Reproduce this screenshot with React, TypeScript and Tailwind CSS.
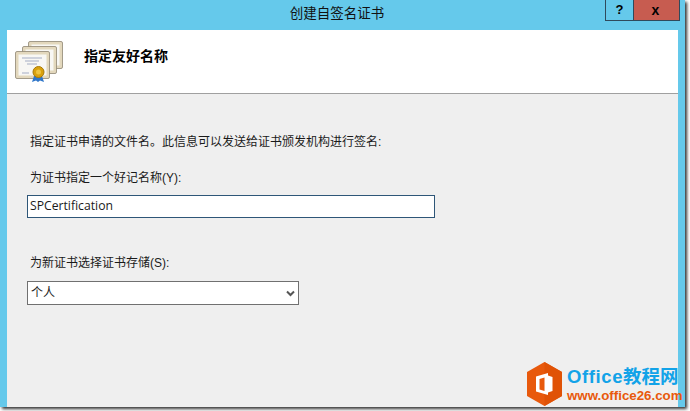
const cjk = "font-['Liberation_Sans','Noto_Sans_CJK_SC',sans-serif]";

function CertIcon() {
  const sheet = (x: number, y: number) => (
    <g>
      <rect x={x + 0.5} y={y + 0.5} width="34" height="27" rx="1.5" fill="#e3d8bd" stroke="#8f8774" strokeWidth="0.8" />
      <rect x={x + 3.5} y={y + 3.5} width="28" height="21" fill="#f8f7f4" />
    </g>
  );
  return (
    <svg width="48" height="42" viewBox="0 0 48 42" className="mt-[3px] shrink-0">
      {sheet(13, 0)}
      {sheet(7, 5)}
      {sheet(0, 10)}
      <path d="M7 17h20M10 20h14M12 23h10M7 32h7" stroke="#a5adc4" strokeWidth="1" />
      <path d="M19 35l-2 6 4-1.500 2 1.500 2-1.500 4 1.500-2-6z" fill="#2f76c9" />
      <circle cx="23.500" cy="31" r="5.500" fill="#d9a10e" stroke="#a87a08" />
      <circle cx="23.500" cy="31" r="2.500" fill="#eec440" />
    </svg>
  );
}

function OfficeLogo() {
  return (
    <div className="absolute left-[527px] top-[362px] flex items-center gap-[5px] whitespace-nowrap">
      <svg width="35" height="44" viewBox="0 0 35 44" className="shrink-0">
        <path d="M17.500 0L35 10V34L17.500 44L0 34V10z" fill="#e8590c" />
        <path d="M17.500 0L35 10V34L17.500 44z" fill="#e05206" />
        <path d="M9 14.500L21 11V33L9 29.500zM12.500 17V27.500L17.500 29V15.500z" fill="#fff" fillRule="evenodd" />
        <path d="M21 13.500L25.500 15V29L21 30.500z" fill="#fff" />
      </svg>
      <div className="flex flex-col">
        <span className="text-[18.500px] leading-[22px] font-bold text-[#12a3e8]">
          <span className="tracking-[0.6px]">Office</span>教程网
        </span>
        <span className="text-[13.300px] leading-[15px] font-bold text-[#e8590c]">www.office26.com</span>
      </div>
    </div>
  );
}

export default function App() {
  return (
    <div className={`relative h-[411px] w-[690px] overflow-hidden bg-white ${cjk} text-[12px] text-[#1a1a1a]`}>
      <div className="flex h-[407px] w-[685px] flex-col bg-[#65c9eb] shadow-[2px_2px_3px_#333]">
        {/* title bar */}
        <div className="relative flex h-[30px] shrink-0 items-center justify-center pb-[1px] pr-[11px] text-[13.500px] text-[#111]">
          创建自签名证书
          <div className="absolute right-[5px] top-0 flex h-[21px] items-center border border-t-0 border-[#2f4a5c] text-black">
            <div className="flex h-full w-[28px] items-center justify-center border-r border-[#2f4a5c] text-[13px] font-bold">?</div>
            <div className="flex h-full w-[45px] items-center justify-center bg-[#c75c50] pr-[2px] text-[14px] font-bold">x</div>
          </div>
        </div>
        <div className="mx-[7px] flex min-h-0 flex-1 flex-col bg-[#efefef]">
          {/* header */}
          <div className="flex h-[64px] shrink-0 items-center gap-[21px] border-b border-[#a0a0a0] bg-white pl-[8px] pb-[2px]">
            <CertIcon />
            <div className="-mt-[9px] text-[14px] font-bold text-black">指定友好名称</div>
          </div>
          {/* form */}
          <div className="flex flex-col pl-[20px] pt-[39px]">
            <p className="h-[18px] pl-[3px] leading-[18px]">指定证书申请的文件名。此信息可以发送给证书颁发机构进行签名:</p>
            <label className="mt-[18px] h-[18px] pl-[3px] leading-[18px]">为证书指定一个好记名称(Y):</label>
            <div className="mt-[8px] flex h-[23px] w-[408px] items-center border border-[#2e5678] bg-white pl-[2px] font-['Open_Sans',sans-serif] text-[12.200px]">SPCertification</div>
            <label className="mt-[36px] h-[18px] pl-[3px] leading-[18px]">为新证书选择证书存储(S):</label>
            <div className="mt-[9px] flex h-[24px] w-[272px] items-center justify-between border border-[#707070] bg-white pl-[3px] pr-[3px]">
              <span>个人</span>
              <svg width="9" height="7" viewBox="0 0 9 7">
                <path d="M1 1.500L4.500 5L8 1.500" fill="none" stroke="#555" strokeWidth="2" />
              </svg>
            </div>
          </div>
        </div>
      </div>
      <OfficeLogo />
    </div>
  );
}
